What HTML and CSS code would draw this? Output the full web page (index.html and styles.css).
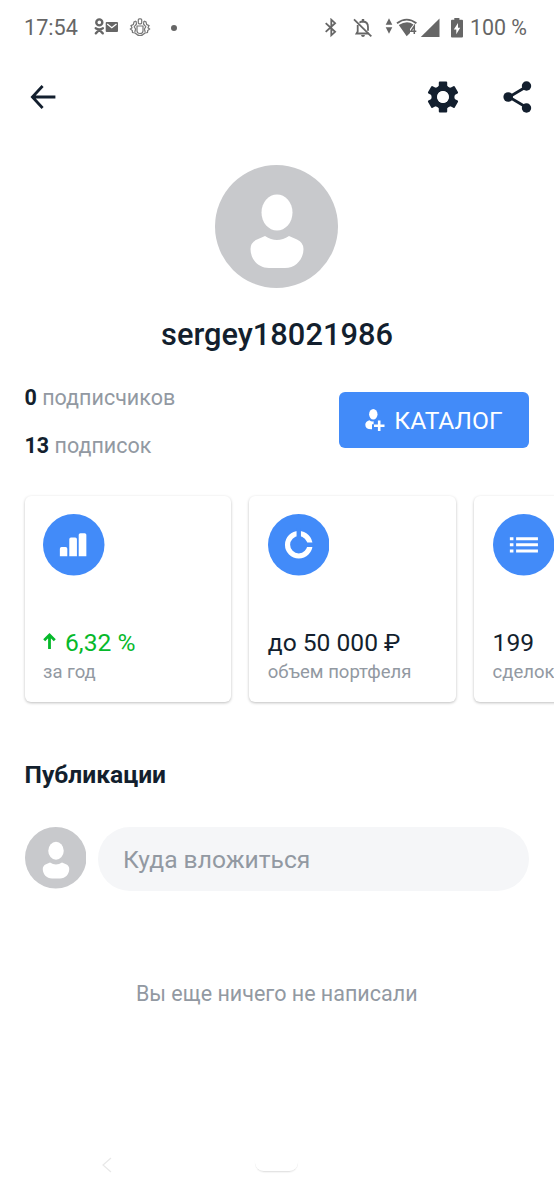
FILE: index.html
```html
<!DOCTYPE html>
<html lang="ru">
<head>
  <meta charset="UTF-8" />
  <meta name="viewport" content="width=device-width, initial-scale=1.0"/>
  <title>sergey18021986</title>
  <link rel="stylesheet" href="styles.css">
</head>
<body>
  <div class="status-bar">
    <span class="status-time">17:54</span>
    <svg class="icon-ok" width="28" height="20" viewBox="0 0 28 20">
      <circle cx="7.3" cy="4.4" r="3" fill="none" stroke="#666" stroke-width="2.4"/>
      <path d="M3.7 10.2 Q7.3 12.4 10.9 10.2 M7.3 11.8 L3.8 15.4 M7.3 11.8 L10.8 15.4" fill="none" stroke="#666" stroke-width="2.3" stroke-linecap="round"/>
      <rect x="13.7" y="4.1" width="12.3" height="10" rx="1" fill="#666"/>
      <path d="M15.2 6 L19.8 9.7 L24.5 6" fill="none" stroke="#fff" stroke-width="1.3"/>
    </svg>
    <svg class="icon-emblem" width="22" height="20" viewBox="0 0 22 20" fill="none" stroke="#777" stroke-width="1.2">
      <rect x="9.3" y="0.8" width="3.4" height="5" rx="1"/>
      <path d="M8 8 H14 V13 Q14 15.500 11 15.500 Q8 15.500 8 13 Z"/>
      <path d="M7 3 L5 4 L4.3 6.600 L2 7.600 L3 9.800 L1.400 11 L3.300 12.600 L3.500 14.600 L6 15 Q8.500 17.500 11 17.500 Q13.500 17.500 16 15 L18.500 14.600 L18.700 12.600 L20.600 11 L19 9.800 L20 7.600 L17.700 6.600 L17 4 L15 3"/>
      <path d="M7 3 L7.500 6 L5.200 8.700 L6.600 11 L5.800 14 M15 3 L14.500 6 L16.800 8.700 L15.400 11 L16.200 14"/>
    </svg>
    <span class="status-dot"></span>
    <div class="status-right">
      <svg width="14" height="20" viewBox="0 0 14 20">
        <path d="M1.7 5.2 L11.1 13.8 L7.3 17.3 V1.7 L11.1 5.2 L1.7 13.8" fill="none" stroke="#666" stroke-width="1.8"/>
      </svg>
      <svg class="icon-bell" width="20" height="20" viewBox="0 0 20 20">
        <path d="M4.7 7 V13.5 L3.5 15.5 H15.6 M6.5 4.6 Q7.8 3.5 10 3.5 Q15 3.8 15 9 V12.7" fill="none" stroke="#666" stroke-width="1.8"/>
        <path d="M10 1 V4" stroke="#666" stroke-width="2.4"/>
        <path d="M8 17 H12 Q11.7 19 10 19 Q8.3 19 8 17" fill="#666"/>
        <path d="M1 1.4 L18.3 18.4" stroke="#666" stroke-width="1.8"/>
      </svg>
      <svg class="icon-data" width="8" height="20" viewBox="0 0 8 20">
        <path d="M4 0.3 L7.3 6.7 H.7 Z M.7 9.3 H7.3 L4 15.700 Z" fill="#666"/>
      </svg>
      <svg class="icon-wifi" width="22" height="20" viewBox="0 0 22 20">
        <path d="M1 5.3 Q10.7 -2 20.4 5.3" fill="none" stroke="#666" stroke-width="1.9"/>
        <path d="M2.8 7.1 Q10.7 2 17.500 6.400 L14 11 V15 L10.7 18.300 Z" fill="#666"/>
        <path d="M18.3 16 V8 L14.9 13.2 H20.3" fill="none" stroke="#666" stroke-width="1.5"/>
      </svg>
      <svg class="icon-signal" width="20" height="20" viewBox="0 0 20 20">
        <path d="M.8 19 L19.5 .6 V19 Z" fill="#666"/>
      </svg>
      <svg class="icon-battery" width="12" height="20" viewBox="0 0 12 20">
        <path d="M3.3 0 H8.4 V1.7 H11 Q12 1.7 12 2.7 V18.4 Q12 19.4 11 19.4 H1 Q0 19.4 0 18.4 V2.7 Q0 1.7 1 1.7 H3.3 Z" fill="#666"/>
        <path d="M7 5 L2.8 11.5 H5.3 V16.3 L9.2 9.8 H7 Z" fill="#fff"/>
      </svg>
      <span class="status-percent">100 %</span>
    </div>
  </div>

  <header class="toolbar">
    <svg width="26" height="26" viewBox="0 0 26 26">
      <path d="M12.6 2 L2.4 13 L12.6 24 M2 13 H25.4" fill="none" stroke="#131f2e" stroke-width="2.8"/>
    </svg>
    <div class="toolbar-actions">
      <svg width="32" height="32" viewBox="0 0 32 32">
        <g fill="#131f2e">
          <path id="tooth" d="M10.4 8 L11.8 4.4 V1.6 Q11.8 .6 12.8 .6 H19.2 Q20.200 .6 20.200 1.6 V4.4 L21.600 8 Z"/>
          <use href="#tooth" transform="rotate(60 16 16)"/>
          <use href="#tooth" transform="rotate(120 16 16)"/>
          <use href="#tooth" transform="rotate(180 16 16)"/>
          <use href="#tooth" transform="rotate(240 16 16)"/>
          <use href="#tooth" transform="rotate(300 16 16)"/>
        </g>
        <circle cx="16" cy="16" r="8.700" fill="none" stroke="#131f2e" stroke-width="5.600"/>
        <circle cx="16" cy="16" r="5.900" fill="#fff"/>
      </svg>
      <svg width="30" height="32" viewBox="0 0 30 32">
        <path d="M24.5 5 L6 16 L24.5 27" fill="none" stroke="#131f2e" stroke-width="2.8"/>
        <circle cx="5.2" cy="16" r="4.8" fill="#131f2e"/>
        <circle cx="23.5" cy="5" r="4.7" fill="#131f2e"/>
        <circle cx="23.5" cy="27" r="4.7" fill="#131f2e"/>
      </svg>
    </div>
  </header>

  <main>
    <section class="profile">
      <svg class="avatar" viewBox="0 0 123 123">
        <g id="person">
          <circle cx="61.5" cy="61.5" r="61.5" fill="#c8c9cc"/>
          <ellipse cx="62" cy="47.5" rx="15.5" ry="18" fill="#fff"/>
          <path d="M50 71 Q62 79 74 71 L82 74.5 Q88.5 77.5 88.5 84 C88.5 94 81 103 70 103 H54 C43 103 35.5 94 35.5 84 Q35.5 77.5 42 74.5 Z" fill="#fff"/>
        </g>
      </svg>
      <h1>sergey18021986</h1>
    </section>

    <section class="summary">
      <div class="counters">
        <p><b>0</b> подписчиков</p>
        <p><b>13</b> подписок</p>
      </div>
      <button class="catalog">
        <svg width="20" height="22" viewBox="0 0 20 22" fill="#fff">
          <ellipse cx="8.3" cy="5.3" rx="4.2" ry="5.3"/>
          <path d="M4.5 11.2 Q6 12.7 8.6 12.3 V15.2 H7 V20.3 Q.3 20.5 .3 15.8 Q.3 12.5 4.5 11.2 Z"/>
          <path d="M14.2 11.500 V22 M9 16.700 H19.500" stroke="#fff" stroke-width="2.6"/>
        </svg>
        <span>КАТАЛОГ</span>
      </button>
    </section>

    <section class="cards">
      <div class="card">
        <svg class="card-icon" viewBox="0 0 62 62">
          <circle cx="31" cy="31" r="31" fill="#428bf9"/>
          <path d="M17 42.5 V35 Q17 33.3 18.7 33.3 H22.8 Q24.5 33.3 24.500 35 V42.5 Z M26.5 42.5 V25.5 Q26.5 23.8 28.2 23.8 H32.5 Q34.2 23.8 34.2 25.5 V42.5 Z M36 42.5 V21 Q36 19.3 37.7 19.3 H42 Q43.7 19.3 43.7 21 V42.5 Z" fill="#fff"/>
        </svg>
        <div class="card-value up">
          <svg width="13" height="17" viewBox="0 0 13 17">
            <path d="M1.2 7.2 L6.5 2 L11.8 7.2 M6.5 2.5 V16" fill="none" stroke="#06b92b" stroke-width="2.8"/>
          </svg>
          <span>6,32 %</span>
        </div>
        <div class="card-label">за год</div>
      </div>
      <div class="card">
        <svg class="card-icon" viewBox="0 0 62 62">
          <circle cx="31" cy="31" r="31" fill="#428bf9"/>
          <circle cx="31" cy="31" r="11.3" fill="none" stroke="#fff" stroke-width="5.2"/>
          <path d="M31 31 V14 M31 31 H47" stroke="#428bf9" stroke-width="4.4"/>
        </svg>
        <div class="card-value">до 50 000 ₽</div>
        <div class="card-label">объем портфеля</div>
      </div>
      <div class="card">
        <svg class="card-icon" viewBox="0 0 62 62">
          <circle cx="31" cy="31" r="31" fill="#428bf9"/>
          <path d="M17 24.9 H20.6 M23.3 24.9 H45.3 M17 31 H20.6 M23.3 31 H45.3 M17 37.2 H20.6 M23.3 37.2 H45.3" stroke="#fff" stroke-width="3"/>
        </svg>
        <div class="card-value">199</div>
        <div class="card-label">сделок</div>
      </div>
    </section>

    <section class="posts">
      <h2>Публикации</h2>
      <div class="composer">
        <svg class="avatar-small" viewBox="0 0 123 123"><use href="#person"/></svg>
        <div class="composer-input">Куда вложиться</div>
      </div>
      <p class="empty">Вы еще ничего не написали</p>
    </section>
  </main>

  <footer class="nav-bar">
    <svg width="12" height="16" viewBox="0 0 12 16">
      <path d="M10 1 L2 8 L10 15" fill="none" stroke="#e8e8e8" stroke-width="1.2"/>
    </svg>
    <span class="nav-home"></span>
  </footer>
</body>
</html>
```

FILE: styles.css
```css
* {
  box-sizing: border-box;
}

body {
  margin: 0;
  width: 554px;
  height: 1200px;
  display: flex;
  flex-direction: column;
  overflow: hidden;
  font-family: Roboto, sans-serif;
  color: #131f2e;
  background: #fff;
}

h1, h2, p {
  margin: 0;
}

svg {
  display: block;
  flex-shrink: 0;
}

/* status bar */
.status-bar {
  display: flex;
  align-items: center;
  height: 55px;
  padding: 0 27px 0 24px;
  font-size: 21.6px;
  color: #666;
}

.icon-ok {
  margin-left: 14px;
}

.icon-emblem {
  margin-left: 9px;
}

.status-dot {
  width: 6px;
  height: 6px;
  margin-left: 20px;
  border-radius: 50%;
  background: #666;
}

.status-right {
  display: flex;
  align-items: center;
  margin-left: auto;
}

.icon-bell {
  margin-left: 15px;
}

.icon-data {
  margin-left: 12px;
}

.icon-wifi {
  margin-left: 3px;
}

.icon-signal {
  margin-left: 2px;
}

.icon-battery {
  margin-left: 11px;
}

.status-percent {
  margin-left: 7px;
  font-size: 21.4px;
}

/* toolbar */
.toolbar {
  display: flex;
  align-items: center;
  justify-content: space-between;
  height: 84px;
  padding: 0 21px 0 30px;
}

.toolbar-actions {
  display: flex;
  gap: 44px;
}

/* profile */
.profile {
  display: flex;
  flex-direction: column;
  align-items: center;
  padding-top: 25.5px;
}

.avatar {
  width: 123px;
  height: 123px;
  margin-right: 1px;
}

h1 {
  margin-top: 29.5px;
  font-size: 30.8px;
  font-weight: 500;
  line-height: 36px;
}

.summary {
  display: flex;
  align-items: flex-start;
  justify-content: space-between;
  height: 124px;
  padding: 32px 25px 0 24.5px;
}

.counters {
  display: flex;
  flex-direction: column;
  gap: 22px;
  font-size: 21.5px;
  line-height: 26px;
  color: #9299a2;
}

.counters b {
  color: #131f2e;
}

.catalog {
  display: flex;
  align-items: center;
  justify-content: center;
  gap: 9px;
  width: 190px;
  height: 56px;
  margin-top: 7px;
  padding: 0;
  border: none;
  border-radius: 6px;
  background: #428bf9;
  color: white;
  font-family: inherit;
  font-size: 24.6px;
}

/* cards */
.cards {
  display: flex;
  gap: 18.3px;
  padding: 18.5px 0 6px 24.5px;
  overflow: hidden;
}

.card {
  display: flex;
  flex-direction: column;
  flex: 0 0 206.5px;
  height: 206px;
  padding: 18.5px;
  border-radius: 6px;
  background: white;
  box-shadow: 0 1px 3px rgba(0,0,0,0.26);
}

.card-icon {
  width: 61.5px;
  height: 61.5px;
}

.card-value {
  display: flex;
  align-items: center;
  margin-top: 52px;
  font-size: 24.6px;
  line-height: 30px;
  white-space: nowrap;
}

.up {
  gap: 9px;
  color: #06b92b;
}

.up svg {
  margin-bottom: 3px;
}

.card-label {
  margin-top: 2.5px;
  font-size: 18.5px;
  line-height: 24px;
  white-space: nowrap;
  color: #9299a2;
}

/* posts */
.posts {
  padding: 52.5px 25px 0 24.5px;
}

h2 {
  font-size: 24.6px;
  font-weight: 700;
  line-height: 30px;
}

.composer {
  display: flex;
  gap: 12px;
  margin-top: 37px;
}

.avatar-small {
  width: 61.5px;
  height: 61.5px;
}

.composer-input {
  flex: 1;
  height: 64px;
  padding-left: 25px;
  border-radius: 32px;
  background: #f5f6f8;
  color: #9299a2;
  font-size: 24.6px;
  line-height: 66px;
}

.empty {
  margin-top: 90px;
  text-align: center;
  font-size: 21.5px;
  line-height: 26px;
  color: #9299a2;
}

/* system navigation */
.nav-bar {
  display: flex;
  align-items: center;
  height: 70px;
  margin-top: auto;
  padding-left: 101px;
}

.nav-home {
  width: 43px;
  height: 14px;
  margin-left: 142px;
  border-radius: 0 0 9px 9px;
  border-bottom: 1px solid #e4e4e4;
  box-shadow: 0 1px 1px rgba(0,0,0,0.04);
}
```
